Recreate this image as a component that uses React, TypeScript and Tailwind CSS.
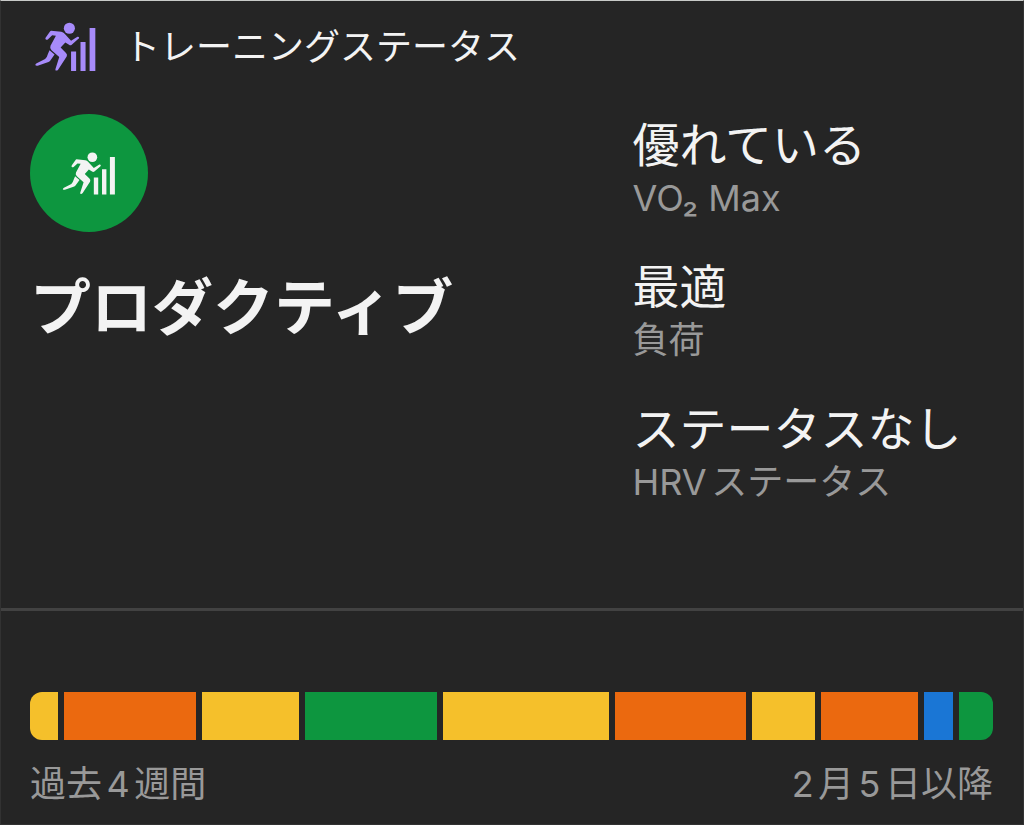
type Segment = { days: number; color: string };

const YELLOW = "bg-[#f5c02b]";
const ORANGE = "bg-[#eb690f]";
const GREEN = "bg-[#0d963f]";
const BLUE = "bg-[#1a76d5]";

const history: Segment[] = [
  { days: 1, color: YELLOW },
  { days: 4, color: ORANGE },
  { days: 3, color: YELLOW },
  { days: 4, color: GREEN },
  { days: 5, color: YELLOW },
  { days: 4, color: ORANGE },
  { days: 2, color: YELLOW },
  { days: 3, color: ORANGE },
  { days: 1, color: BLUE },
  { days: 1, color: GREEN },
];
const totalDays = history.reduce((sum, s) => sum + s.days, 0);

const metrics = [
  { value: "優れている", name: "VO₂ Max" },
  { value: "最適", name: "負荷" },
  { value: "ステータスなし", name: "HRVステータス" },
];

function RunnerIcon({ className }: { className: string }) {
  return (
    <svg viewBox="46 38 181 147" className={className} fill="currentColor" aria-hidden="true">
      <circle cx="148" cy="56" r="16.5" />
      <path d="M94 63 L124 66 Q130 67 134 72 L153 93 L172 81 Q176 80 177 84 Q177 86 174 88 L155 105 Q151 108 147 105 L136 98 L122 113 L138 129 Q143 134 140 140 L115 178 Q111 183 107 181 Q106 179 107 176 L118 141 L95 121 Q89 115 92 108 L108 78 L97 77 L84 89 Q79 92 77 88 Q76 85 79 82 L90 66 Q92 63 94 63 Z" />
      <path d="M89 121 L104 134 L91 152 Q89 155 86 156 L54 167 Q48 168 47 165 Q47 162 51 160 L76 147 Q82 142 84 133 Z" />
      <path d="M153 125h15v58h-15zM181 97h15v86h-15zM208 55h17v128h-17z" />
    </svg>
  );
}

export default function App() {
  return (
    <main className="flex min-h-screen flex-col border border-[#323232] border-t-[#c8cac8] bg-[#252525] font-['Inter','Noto_Sans_CJK_JP',sans-serif] text-[#f3f3f3] [text-autospace:normal]">
      <header className="flex items-center gap-7 px-[29px] pt-[21px]">
        <RunnerIcon className="ml-[5px] h-[50px] w-[61px] text-[#a78bfa]" />
        <h1 className="text-[36px] leading-[50px]">トレーニングステータス</h1>
      </header>

      <section className="grid grid-cols-[5fr_3fr] px-[29px] pt-[42px]">
        <div>
          <div className="flex size-[118px] items-center justify-center rounded-full bg-[#0d963f]">
            <RunnerIcon className="h-[43px] w-[54px]" />
          </div>
          <h2 className="mt-[38px] text-[61px] leading-[76px] font-bold">プロダクティブ</h2>
        </div>
        <dl className="flex flex-col gap-9 pt-px">
          {metrics.map((m) => (
            <div key={m.name} className="flex flex-col-reverse whitespace-nowrap">
              <dt className="text-[36px] leading-[46px] text-[#999999]">{m.name}</dt>
              <dd className="text-[47px] leading-[60px]">{m.value}</dd>
            </div>
          ))}
        </dl>
      </section>

      <hr className="mt-[103px] border-t-3 border-[#424242]" />

      <section className="pt-[81px] pr-[30px] pl-[29px]">
        <div className="flex h-12 overflow-hidden rounded-xl">
          {history.map((s, i) => (
            <div
              key={i}
              className="pr-[6px] last:pr-0"
              style={{ width: `${(s.days / totalDays) * 100}%` }}
            >
              <div className={`h-full ${s.color}`} />
            </div>
          ))}
        </div>
        <div className="flex justify-between pt-[19px] text-[36px] leading-[50px] text-[#999999]">
          <span>過去4週間</span>
          <span>2月5日以降</span>
        </div>
      </section>
    </main>
  );
}
